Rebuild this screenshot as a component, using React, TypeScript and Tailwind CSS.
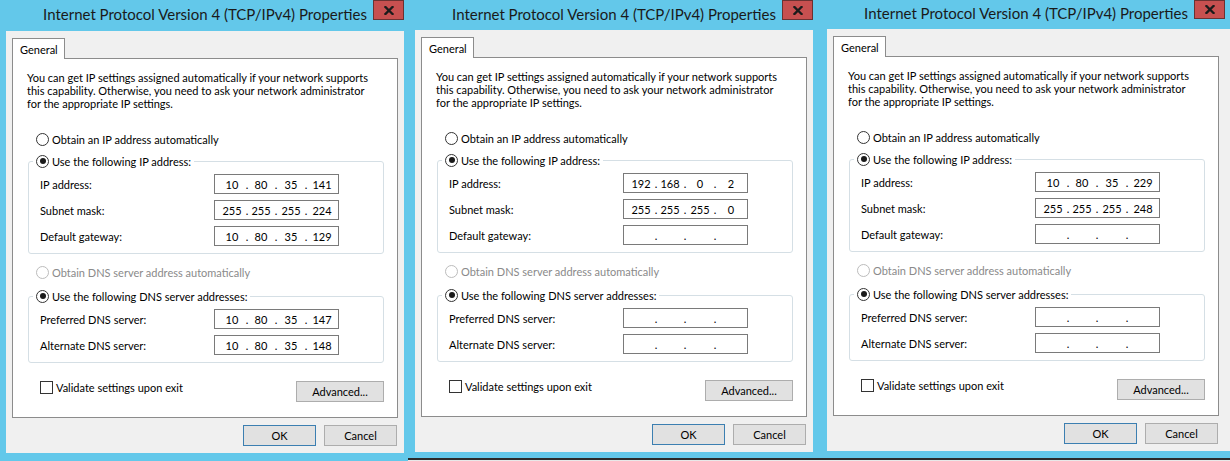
import React from 'react';

type Addr = { ip?: string; mask?: string; gateway?: string; dns1?: string; dns2?: string };

const IpBox = ({ value }: { value?: string }) => {
  const parts = value ? value.split('.') : ['', '', '', ''];
  return (
    <div className="flex h-[20px] w-[125px] items-center border border-[#7a7a7a] bg-white pl-[3px] text-black">
      <span className="flex w-[28px] justify-center">{parts[0]}</span>
      <span className="flex w-[2px] justify-center">.</span>
      <span className="flex w-[26px] justify-center">{parts[1]}</span>
      <span className="flex w-[4px] justify-center">.</span>
      <span className="flex w-[26px] justify-center">{parts[2]}</span>
      <span className="flex w-[4px] justify-center">.</span>
      <span className="flex w-[28px] justify-center">{parts[3]}</span>
    </div>
  );
};

const Radio = ({ checked, disabled }: { checked?: boolean; disabled?: boolean }) => (
  <span
    className={`flex h-[13px] w-[13px] shrink-0 items-center justify-center rounded-full border bg-white ${
      disabled ? 'border-[#bcbcbc]' : 'border-[#333333]'
    }`}
  >
    {checked && <span className="h-[6px] w-[6px] rounded-full bg-[#1a1a1a]" />}
  </span>
);

const Field = ({ label, value }: { label: string; value?: string }) => (
  <div className="flex items-center pl-[11px]">
    <span className="w-[174px]">{label}</span>
    <IpBox value={value} />
  </div>
);

const CloseGlyph = () => (
  <svg width="10" height="9" viewBox="0 0 10 9">
    <path d="M1.5 1 L8.5 8 M8.5 1 L1.5 8" stroke="#1b1b1b" strokeWidth="2.3" strokeLinecap="square" />
  </svg>
);

interface DialogProps {
  addr: Addr;
  width: string;
  titleBar: string;
  closeBox: string;
  titlePad: string;
}

const Dialog: React.FC<DialogProps> = ({ addr, width, titleBar, closeBox, titlePad }) => {
  return (
    <div className={`flex flex-col ${width}`}>
      <div className={`grid w-[398px] grid-cols-[31px_1fr_31px] ${titleBar}`}>
        <div />
        <div className={`whitespace-nowrap text-center text-[15px] leading-[20px] text-[#1a1a1a] ${titlePad}`}>
          Internet Protocol Version 4 (TCP/IPv4) Properties
        </div>
        <div className={`flex items-center justify-center border border-[#6b3232] bg-[#c75050] ${closeBox}`}>
          <CloseGlyph />
        </div>
      </div>

      <div className="flex h-[422px] flex-col whitespace-nowrap bg-[#f0f0f0] pl-[6px] pt-[7px] text-[11px] leading-[13px] text-black">
        <div className="relative z-10 -mb-px flex h-[21px] w-[53px] items-center border border-b-0 border-[#8c8c8c] bg-white pl-[7px]">
          General
        </div>

        <div className="flex h-[360px] w-[386px] flex-col border border-[#8c8c8c] bg-white">
          <p className="pl-[14px] pt-[12px]">
            You can get IP settings assigned automatically if your network supports
            <br />
            this capability. Otherwise, you need to ask your network administrator
            <br />
            for the appropriate IP settings.
          </p>

          <div className="mt-[23px] flex items-center gap-[3px] pl-[23px]">
            <Radio />
            <span>Obtain an IP address automatically</span>
          </div>

          <fieldset className="ml-[15px] mt-[8px] flex w-[356px] flex-col gap-[6px] rounded-[3px] border border-[#d5dfe5] pb-[7px] pt-[6px]">
            <legend className="ml-[4px] flex h-[14px] items-center gap-[3px] px-[3px]">
              <Radio checked />
              <span>Use the following IP address:</span>
            </legend>
            <Field label="IP address:" value={addr.ip} />
            <Field label="Subnet mask:" value={addr.mask} />
            <Field label="Default gateway:" value={addr.gateway} />
          </fieldset>

          <div className="mt-[12px] flex items-center gap-[3px] pl-[23px] text-[#8a8a8a]">
            <Radio disabled />
            <span>Obtain DNS server address automatically</span>
          </div>

          <fieldset className="ml-[15px] mt-[10px] flex w-[356px] flex-col gap-[6px] rounded-[3px] border border-[#d5dfe5] pb-[7px] pt-[6px]">
            <legend className="ml-[4px] flex h-[14px] items-center gap-[3px] px-[3px]">
              <Radio checked />
              <span>Use the following DNS server addresses:</span>
            </legend>
            <Field label="Preferred DNS server:" value={addr.dns1} />
            <Field label="Alternate DNS server:" value={addr.dns2} />
          </fieldset>

          <div className="ml-[15px] mt-[18px] flex w-[356px] items-start pl-[12px]">
            <div className="flex items-center gap-[3px]">
              <span className="h-[13px] w-[13px] border border-[#333333] bg-white" />
              <span>Validate settings upon exit</span>
            </div>
            <button className="ml-auto h-[21px] w-[88px] border border-[#adadad] bg-[#e1e1e1]">
              Advanced...
            </button>
          </div>
        </div>

        <div className="mt-[7px] flex w-[392px] justify-end gap-[8px] pr-[7px]">
          <button className="h-[21px] w-[73px] border border-[#3c7fb1] bg-[#e1e1e1]">OK</button>
          <button className="h-[21px] w-[73px] border border-[#adadad] bg-[#e1e1e1]">Cancel</button>
        </div>
      </div>
    </div>
  );
};

const App: React.FC = () => {
  return (
    <div className="flex h-[461px] w-[1230px] overflow-hidden bg-[#63c8ea] font-['Lato',sans-serif]">
      <div className="w-[408px] shrink-0 pl-[6px]">
        <Dialog
          addr={{ ip: '10.80.35.141', mask: '255.255.255.224', gateway: '10.80.35.129', dns1: '10.80.35.147', dns2: '10.80.35.148' }}
          width="w-[398px]"
          titleBar="h-[31px]"
          closeBox="h-[20px]"
          titlePad="pt-[4px]"
        />
      </div>
      <div className="flex w-[822px] flex-col">
        <div className="flex h-[458px]">
          <div className="w-[412px] shrink-0 pl-[7px]">
            <Dialog
              addr={{ ip: '192.168.0.2', mask: '255.255.255.0' }}
              width="w-[398px]"
              titleBar="h-[30px]"
              closeBox="h-[20px]"
              titlePad="pt-[4px]"
            />
          </div>
          <div className="w-[410px] shrink-0 pl-[7px]">
            <Dialog
              addr={{ ip: '10.80.35.229', mask: '255.255.255.248' }}
              width="w-[403px]"
              titleBar="h-[29px]"
              closeBox="h-[19px]"
              titlePad="pt-[3px]"
            />
          </div>
        </div>
        <div className="h-[2px] bg-[#2b2b2b]" />
        <div className="h-[1px] bg-[#e8e8e8]" />
      </div>
    </div>
  );
};

export default App;
